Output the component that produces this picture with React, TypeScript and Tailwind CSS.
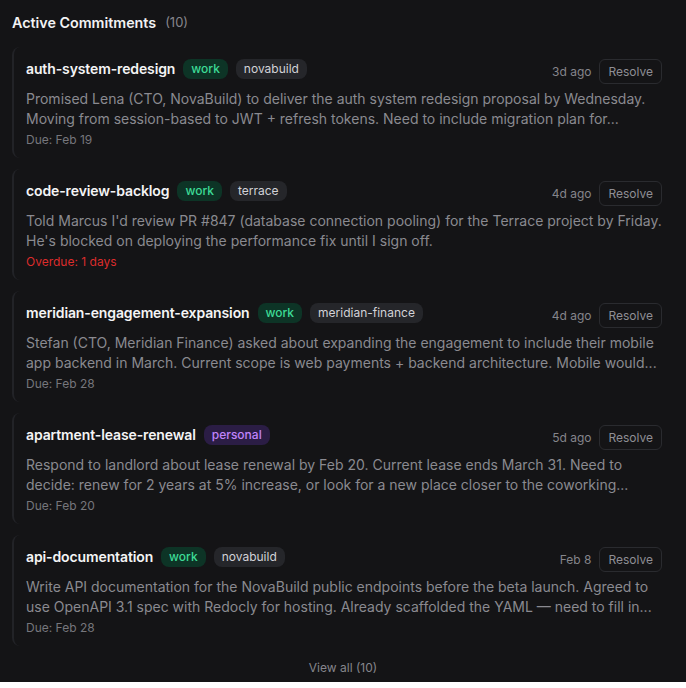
import React from "react";

type Tag = { label: string; kind: "work" | "personal" | "plain" };
type Item = {
  title: string;
  tags: Tag[];
  when: string;
  desc: string;
  due: string;
  overdue?: boolean;
};

const items: Item[] = [
  {
    title: "auth-system-redesign",
    tags: [
      { label: "work", kind: "work" },
      { label: "novabuild", kind: "plain" },
    ],
    when: "3d ago",
    desc: "Promised Lena (CTO, NovaBuild) to deliver the auth system redesign proposal by Wednesday. Moving from session-based to JWT + refresh tokens. Need to include migration plan for...",
    due: "Due: Feb 19",
  },
  {
    title: "code-review-backlog",
    tags: [
      { label: "work", kind: "work" },
      { label: "terrace", kind: "plain" },
    ],
    when: "4d ago",
    desc: "Told Marcus I'd review PR #847 (database connection pooling) for the Terrace project by Friday. He's blocked on deploying the performance fix until I sign off.",
    due: "Overdue: 1 days",
    overdue: true,
  },
  {
    title: "meridian-engagement-expansion",
    tags: [
      { label: "work", kind: "work" },
      { label: "meridian-finance", kind: "plain" },
    ],
    when: "4d ago",
    desc: "Stefan (CTO, Meridian Finance) asked about expanding the engagement to include their mobile app backend in March. Current scope is web payments + backend architecture. Mobile would...",
    due: "Due: Feb 28",
  },
  {
    title: "apartment-lease-renewal",
    tags: [{ label: "personal", kind: "personal" }],
    when: "5d ago",
    desc: "Respond to landlord about lease renewal by Feb 20. Current lease ends March 31. Need to decide: renew for 2 years at 5% increase, or look for a new place closer to the coworking...",
    due: "Due: Feb 20",
  },
  {
    title: "api-documentation",
    tags: [
      { label: "work", kind: "work" },
      { label: "novabuild", kind: "plain" },
    ],
    when: "Feb 8",
    desc: "Write API documentation for the NovaBuild public endpoints before the beta launch. Agreed to use OpenAPI 3.1 spec with Redocly for hosting. Already scaffolded the YAML — need to fill in...",
    due: "Due: Feb 28",
  },
];

function TagPill({ tag }: { tag: Tag }) {
  if (tag.kind === "work")
    return (
      <span className="h-5 px-2 rounded-lg bg-[#0d3426] text-[#3ddc97] text-[12px] font-medium leading-5 flex items-center">
        {tag.label}
      </span>
    );
  if (tag.kind === "personal")
    return (
      <span className="h-5 px-2 rounded-lg bg-[#2b1d45] text-[#c084fc] text-[12px] font-medium leading-5 flex items-center">
        {tag.label}
      </span>
    );
  return (
    <span className="h-5 px-2 rounded-lg bg-[#25262a] text-[#d2d2d7] text-[12px] leading-5 flex items-center">
      {tag.label}
    </span>
  );
}

function Card({ item }: { item: Item }) {
  return (
    <div className="border-l-2 border-[#222327] rounded-lg pl-3 pr-3 pt-3 pb-[10px]">
      <div className="flex items-start justify-between">
        <div className="flex items-center gap-2 h-5">
          <span className="text-[14px] font-semibold tracking-[-0.12px] text-[#f4f4f5] leading-5">{item.title}</span>
          {item.tags.map((t) => (
            <TagPill key={t.label} tag={t} />
          ))}
        </div>
        <div className="flex items-center gap-2 h-[25px]">
          <span className="text-[12px] text-[#85858b]">{item.when}</span>
          <button className="h-[25px] px-2 rounded-md border border-[#2a2b2f] text-[12px] text-[#8e8e94] leading-none flex items-center">
            Resolve
          </button>
        </div>
      </div>
      <p className="mt-[5px] text-[14px] leading-5 text-[#8a8a90] line-clamp-2">{item.desc}</p>
      <div
        className={
          item.overdue
            ? "mt-[3px] text-[12px] leading-4 text-[#dc2c2c]"
            : "mt-[3px] text-[12px] leading-4 text-[#76767c]"
        }
      >
        {item.due}
      </div>
    </div>
  );
}

export default function App() {
  return (
    <div className="bg-[#141416] font-['Inter',sans-serif] px-3 pt-3 pb-[2px]">
      <div className="flex items-center gap-[9px] h-[22px]">
        <span className="text-[14.3px] font-semibold text-[#f2f2f3]">Active Commitments</span>
        <span className="text-[13px] text-[#86868c]">(10)</span>
      </div>
      <div className="mt-[13px] flex flex-col gap-[11px]">
        {items.map((it) => (
          <Card key={it.title} item={it} />
        ))}
      </div>
      <div className="mt-[10px] flex justify-center">
        <button className="py-1 text-[12px] leading-4 text-[#86868c]">View all (10)</button>
      </div>
    </div>
  );
}
